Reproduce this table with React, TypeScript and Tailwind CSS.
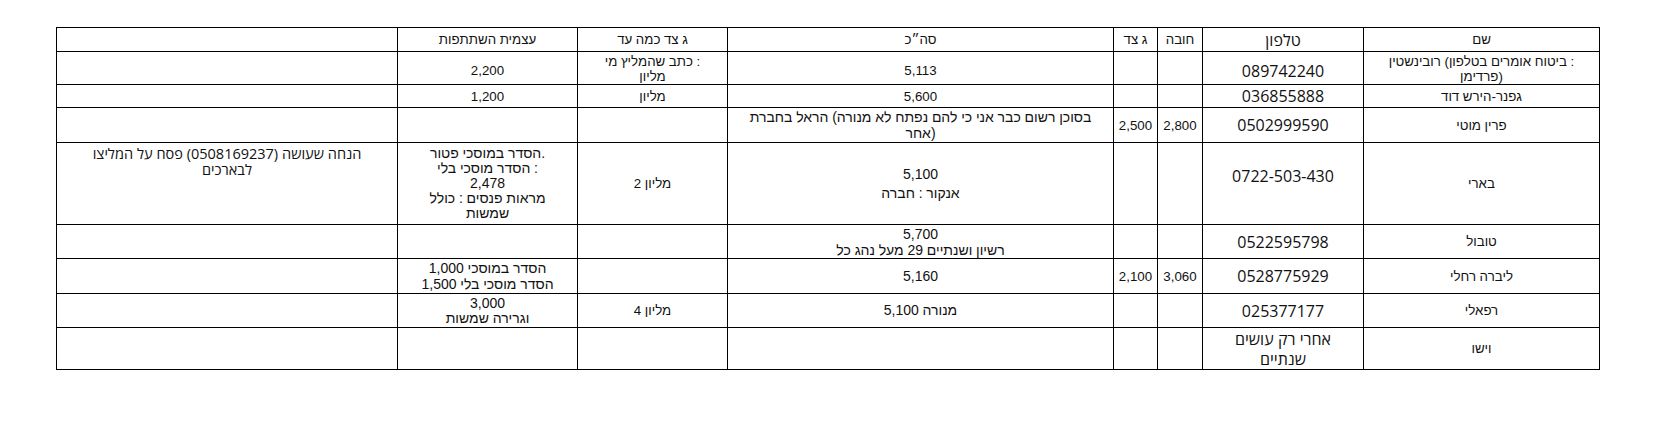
import type { ReactNode } from "react";

// The source document shows each word in left-to-right order, with every Hebrew
// run kept on its own. Each run is a separate flex item so the order is fixed.
const Word = ({ word }: { word: string }) => (
  <span className="inline-flex whitespace-nowrap">
    {word
      .split(/([\u0590-\u05FF]+)/)
      .filter((p) => p !== "")
      .map((p, i) => (
        <span key={i}>{p}</span>
      ))}
  </span>
);

const Line = ({ text }: { text: string }) => (
  <div className="flex justify-center gap-x-[0.27em] whitespace-nowrap">
    {text.split(/\s+/).map((w, i) => (
      <Word key={i} word={w} />
    ))}
  </div>
);

type Cell = {
  lines?: string[];
  big?: boolean;
  soft?: boolean;
  className?: string;
};

const Td = ({ cell, height }: { cell: Cell; height: number }) => {
  const font = cell.big
    ? "font-['Open_Sans','Noto_Sans','DejaVu_Sans',sans-serif] text-[16px] leading-[20px]"
    : cell.soft
      ? "font-['Open_Sans','Noto_Sans','DejaVu_Sans',sans-serif] text-[14.5px] leading-[16px]"
      : "font-['Liberation_Sans','DejaVu_Sans',sans-serif] text-[13.3px] leading-[15px]";
  return (
    <td className="border border-black p-0 align-middle" style={{ height }}>
      <div className={`px-[6px] text-center text-[#111] ${font} ${cell.className ?? ""}`}>
        {cell.lines?.map((l, i) => <Line key={i} text={l} />)}
      </div>
    </td>
  );
};

// columns from right to left: שם, טלפון, חובה, צד ג, סה״כ, עד כמה צד ג, השתתפות עצמית, הערות
const widths = [236, 161, 45, 44, 386, 150, 180, 341];

const header: Cell[] = [
  { lines: ["שם"] },
  { lines: ["טלפון"], big: true },
  { lines: ["חובה"] },
  { lines: ["צד ג"] },
  { lines: ["סה״כ"] },
  { lines: ["עד כמה צד ג"] },
  { lines: ["השתתפות עצמית"] },
  {},
];

const rows: { h: number; cells: Cell[] }[] = [
  {
    h: 33,
    cells: [
      { lines: ["רובינשטין (בטלפון אומרים ביטוח :", "פרדימן)"], className: "pt-[2px]" },
      { lines: ["089742240"], big: true, className: "pt-[5px]" },
      {},
      {},
      { lines: ["5,113"], className: "pt-[5px]" },
      { lines: ["מי שהמליץ כתב :", "מליון"], className: "pt-[2px]" },
      { lines: ["2,200"], className: "pt-[5px]" },
      {},
    ],
  },
  {
    h: 23,
    cells: [
      { lines: ["דוד הירש-גפנר"] },
      { lines: ["036855888"], big: true },
      {},
      {},
      { lines: ["5,600"] },
      { lines: ["מליון"] },
      { lines: ["1,200"] },
      {},
    ],
  },
  {
    h: 35,
    cells: [
      { lines: ["מוטי פרין"] },
      { lines: ["0502999590"], big: true },
      { lines: ["2,800"] },
      { lines: ["2,500"] },
      { lines: ["בחברת הראל (מנורה לא נפתח להם כי אני כבר רשום בסוכן", "אחר)"], className: "text-[14px] leading-[16px]" },
      {},
      {},
      {},
    ],
  },
  {
    h: 82,
    cells: [
      { lines: ["בארי"] },
      { lines: ["0722-503-430"], big: true, className: "pb-[16px]" },
      {},
      {},
      { lines: ["5,100", "חברה : אנקור"], className: "text-[14px] leading-[19px]" },
      { lines: ["2 מליון"] },
      { lines: ["פטור במוסכי הסדר.", "בלי מוסכי הסדר :", "2,478", "כולל : פנסים מראות", "שמשות"], className: "text-[14px] leading-[15.4px]" },
      { lines: ["המליצו על פסח (0508169237) שעושה הנחה", "לבארכים"], soft: true, className: "pb-[44px]" },
    ],
  },
  {
    h: 34,
    cells: [
      { lines: ["טובול"] },
      { lines: ["0522595798"], big: true },
      {},
      {},
      { lines: ["5,700", "כל נהג מעל 29 ושנתיים רשיון"], className: "text-[14px] leading-[16px]" },
      {},
      {},
      {},
    ],
  },
  {
    h: 35,
    cells: [
      { lines: ["רחלי ליברה"] },
      { lines: ["0528775929"], big: true },
      { lines: ["3,060"] },
      { lines: ["2,100"] },
      { lines: ["5,160"], className: "text-[14px]" },
      {},
      { lines: ["1,000 במוסכי הסדר", "1,500 בלי מוסכי הסדר"], className: "text-[14px] leading-[16px]" },
      {},
    ],
  },
  {
    h: 34,
    cells: [
      { lines: ["רפאלי"] },
      { lines: ["025377177"], big: true },
      {},
      {},
      { lines: ["5,100 מנורה"], className: "text-[14px]" },
      { lines: ["4 מליון"] },
      { lines: ["3,000", "שמשות וגרירה"], className: "text-[14px] leading-[14px]" },
      {},
    ],
  },
  {
    h: 42,
    cells: [
      { lines: ["וישו"] },
      { lines: ["עושים רק אחרי", "שנתיים"], big: true },
      {},
      {},
      {},
      {},
      {},
      {},
    ],
  },
];

export default function App(): ReactNode {
  const cols = [...widths].reverse();
  return (
    <div className="h-[423px] w-[1676px] bg-white pt-[27px] pl-[56px]">
      <table className="w-[1543px] table-fixed border-collapse">
        <colgroup>
          {cols.map((w, i) => (
            <col key={i} style={{ width: w }} />
          ))}
        </colgroup>
        <tbody>
          <tr>
            {[...header].reverse().map((c, i) => (
              <Td key={i} cell={c} height={24} />
            ))}
          </tr>
          {rows.map((r, ri) => (
            <tr key={ri}>
              {[...r.cells].reverse().map((c, i) => (
                <Td key={i} cell={c} height={r.h} />
              ))}
            </tr>
          ))}
        </tbody>
      </table>
    </div>
  );
}
